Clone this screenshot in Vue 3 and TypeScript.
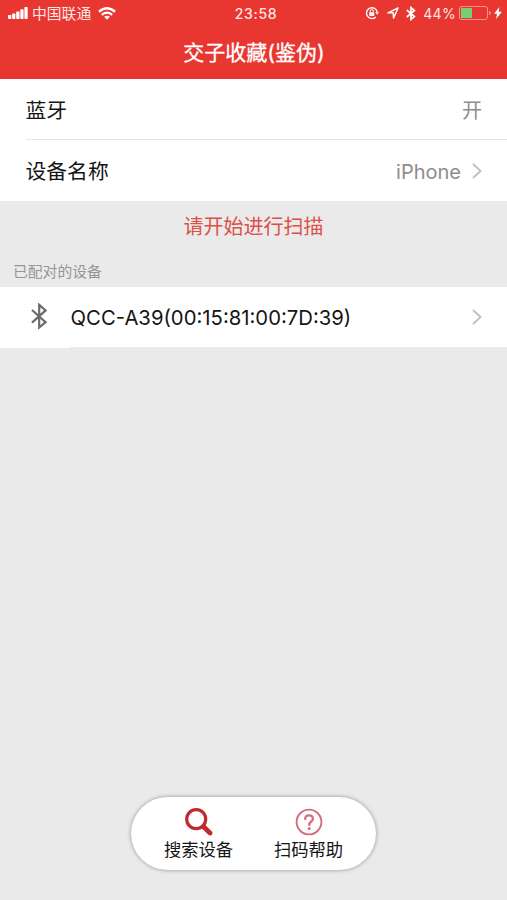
<script setup lang="ts">
import { ref } from 'vue'

interface Device {
  id: number
  name: string
}

const deviceName = ref<string>('iPhone')
const batteryLevel = ref<number>(44)
const devices = ref<Device[]>([{ id: 1, name: 'QCC-A39(00:15:81:00:7D:39)' }])
</script>

<template>
  <main class="screen">
    <header class="header">
      <div class="status">
        <div class="status-left">
          <svg class="signal" width="20" height="12" viewBox="0 0 20 12" fill="#fff">
            <rect x="0" y="8" width="3.3" height="4" rx="0.8" />
            <rect x="4.1" y="6.5" width="3.3" height="5.5" rx="0.8" />
            <rect x="8.2" y="4.5" width="3.3" height="7.5" rx="0.8" />
            <rect x="12.3" y="2.3" width="3.3" height="9.7" rx="0.8" />
            <rect x="16.4" y="0" width="3.3" height="12" rx="0.8" />
          </svg>
          <span class="carrier">中国联通</span>
          <svg class="wifi" width="18" height="13" viewBox="0 0 18 13" fill="none" stroke="#fff">
            <path d="M1 4.7Q9-2.1 17 4.7" stroke-width="2.5" />
            <path d="M3.8 7.8Q9 3.5 14.2 7.8" stroke-width="2.2" />
            <path d="M6.1 9.8Q9 7.5 11.9 9.8L9 12.8Z" fill="#fff" stroke="none" />
          </svg>
        </div>
        <span class="time">23:58</span>
        <div class="status-right">
          <svg class="lock" width="14" height="14" viewBox="0 0 14 14" fill="none" stroke="#fff">
            <path d="M10.8 10.9A5.4 5.4 0 1 1 12.2 6.2" stroke-width="1.4" />
            <path d="M10.4 6.2H14L12.2 8.8Z" fill="#fff" stroke="none" />
            <path d="M5.2 6.4V5.2a1.6 1.6 0 0 1 3.2 0v1.2" stroke-width="1" />
            <rect x="4.3" y="6.2" width="5" height="3.8" rx="0.4" fill="#fff" stroke="none" />
          </svg>
          <svg class="location" width="12" height="12" viewBox="0 0 12 12" fill="none" stroke="#fff" stroke-width="1.4" stroke-linejoin="round">
            <path d="M.9 5.9L11.1 1L6.5 11.1L6.2 5.8Z" />
          </svg>
          <svg class="bt-small" width="10" height="15" viewBox="0 0 10 15" fill="none" stroke="#fff" stroke-width="1.7">
            <path d="M.8 4L8.4 10.5L5 13.4V1.6L8.4 4.5L.8 11" />
          </svg>
          <span class="percent">{{ batteryLevel }}%</span>
          <span class="battery"><span class="charge" :style="{ width: batteryLevel + '%' }"></span></span>
          <svg class="nub" width="2" height="4" viewBox="0 0 2 4"><path d="M0 0Q2 .5 2 2T0 4Z" fill="#f4918c" /></svg>
          <svg class="bolt" width="8" height="12" viewBox="0 0 8 12"><path d="M5.3 0L.1 6.7H3L2.1 12L7.9 4.8H4.8Z" fill="#fff" /></svg>
        </div>
      </div>
      <h1 class="title">交子收藏(鉴伪)</h1>
    </header>

    <section class="settings">
      <div class="row divided">
        <span class="label">蓝牙</span>
        <span class="value">开</span>
      </div>
      <div class="row">
        <span class="label">设备名称</span>
        <span class="value phone">{{ deviceName }}</span>
        <svg class="chevron" width="10" height="16" viewBox="0 0 10 16"><path d="M1 1L8.6 8L1 15" /></svg>
      </div>
    </section>

    <p class="prompt">请开始进行扫描</p>
    <h2 class="group">已配对的设备</h2>

    <section>
      <div v-for="device in devices" :key="device.id" class="device">
        <div class="device-icon">
          <svg width="17" height="27" viewBox="0 0 17 27" fill="none" stroke="#6b6b6b" stroke-width="2.2">
            <path d="M1 7L14.6 19.2L8.2 24.5V1.8L14.6 7.4L1 19.6" />
          </svg>
        </div>
        <div class="device-body">
          <span class="device-name">{{ device.name }}</span>
          <svg class="chevron" width="10" height="16" viewBox="0 0 10 16"><path d="M1 1L8.6 8L1 15" /></svg>
        </div>
      </div>
    </section>

    <nav class="actions">
      <button class="action" type="button">
        <svg width="28" height="28" viewBox="0 0 28 28" fill="none" stroke="#c3282c">
          <circle cx="11.2" cy="11.2" r="9.5" stroke-width="3.2" />
          <path d="M18.3 18.5L25 25" stroke-width="4.8" stroke-linecap="round" />
        </svg>
        <span>搜索设备</span>
      </button>
      <button class="action" type="button">
        <svg width="28" height="28" viewBox="0 0 28 28" fill="none" stroke="#d46d7c">
          <circle cx="14" cy="14" r="12.4" stroke-width="1.9" />
          <path d="M10.2 11C10.2 8.6 11.8 7.4 14 7.4S17.9 8.8 17.9 10.9C17.9 13.5 14.2 13.6 14.2 17" stroke-width="2.3" stroke-linecap="round" />
          <circle cx="14.2" cy="20.4" r="1.5" fill="#d46d7c" stroke="none" />
        </svg>
        <span>扫码帮助</span>
      </button>
    </nav>
  </main>
</template>

<style>
body {
  background: #eaeaea;
}
</style>

<style scoped>
.screen {
  display: flex;
  flex-direction: column;
  box-sizing: border-box;
  width: 100%;
  min-height: 100vh;
  padding-bottom: 30px;
  background: #eaeaea;
  color: #151515;
  font-family: Inter, "Noto Sans CJK SC", sans-serif;
}

svg {
  display: block;
  flex: none;
}

.header {
  height: 79px;
  background: #e83631;
  color: #fff;
}

.status {
  display: grid;
  grid-template-columns: 1fr auto 1fr;
  align-items: center;
  height: 27px;
  padding: 0 5px 0 8px;
  color: #ffe9e7;
}

.status-left,
.status-right {
  display: flex;
  align-items: center;
}

.status-left {
  margin-top: -1px;
}

.status-right {
  justify-content: flex-end;
  margin-top: -1px;
}

.carrier {
  margin: 1px 7px 0 4px;
  font-size: 14.8px;
  line-height: 20px;
}

.time {
  padding-left: 2px;
  font-size: 14px;
  font-weight: 500;
  letter-spacing: 0.7px;
}

.location {
  margin-left: 8px;
}

.bt-small {
  margin-left: 7px;
}

.percent {
  margin: 0 3px 0 7px;
  font-size: 14px;
  letter-spacing: 0.3px;
}

.battery {
  box-sizing: border-box;
  flex: none;
  width: 29px;
  height: 14px;
  padding: 1px;
  border: 1px solid #f4918c;
  border-radius: 3px;
}

.charge {
  display: block;
  height: 100%;
  border-radius: 1px;
  background: #78cf72;
}

.nub {
  margin-left: 1px;
}

.bolt {
  margin-left: 3px;
}

.title {
  margin: 0;
  padding: 1px 0 0 1px;
  font-size: 21px;
  font-weight: 400;
  line-height: 50px;
  text-align: center;
  -webkit-text-stroke: 0.3px #fff;
}

.settings {
  background: #fff;
}

.row {
  display: flex;
  align-items: center;
  height: 61px;
  margin-left: 26px;
  padding: 2px 25px 0 0;
  box-sizing: border-box;
}

.divided {
  padding-top: 4px;
  border-bottom: 1px solid #e6e6e6;
}

.label {
  flex: 1;
  margin-left: -0.5px;
  font-size: 20.8px;
  line-height: 30px;
}

.value {
  color: #8d8d8d;
  font-size: 20px;
  line-height: 30px;
}

.phone {
  margin-right: 11px;
}

.row .chevron {
  margin-top: -2px;
}

.chevron {
  fill: none;
  stroke: #bebebe;
  stroke-width: 1.8;
}

.prompt {
  margin: 10px 0 0;
  color: #dc5147;
  font-size: 20px;
  line-height: 32px;
  text-align: center;
}

.group {
  height: 44px;
  margin: 0;
  padding: 19px 0 0 13px;
  box-sizing: border-box;
  color: #969696;
  font-size: 14.8px;
  font-weight: 400;
  line-height: 20px;
}

.device {
  display: flex;
  height: 61px;
}

.device-icon {
  display: flex;
  box-sizing: border-box;
  width: 70px;
  padding: 16px 0 0 31px;
  background: #fff;
}

.device-body {
  display: flex;
  flex: 1;
  align-items: center;
  justify-content: space-between;
  height: 60px;
  padding: 0 25px 0 0.6px;
  box-sizing: border-box;
  background: #fff;
}

.device-name {
  font-size: 20.3px;
}

.actions {
  display: flex;
  justify-content: center;
  box-sizing: border-box;
  width: 245px;
  height: 73px;
  margin: auto auto 0;
  padding-top: 11px;
  border-radius: 37px;
  background: #fff;
  box-shadow: 0 0 4px rgba(0, 0, 0, 0.38);
}

.action {
  display: flex;
  flex-direction: column;
  align-items: center;
  width: 110px;
  padding: 0;
  border: 0;
  background: none;
  color: #151515;
  font: inherit;
  font-size: 17.3px;
  line-height: 27px;
}
</style>
